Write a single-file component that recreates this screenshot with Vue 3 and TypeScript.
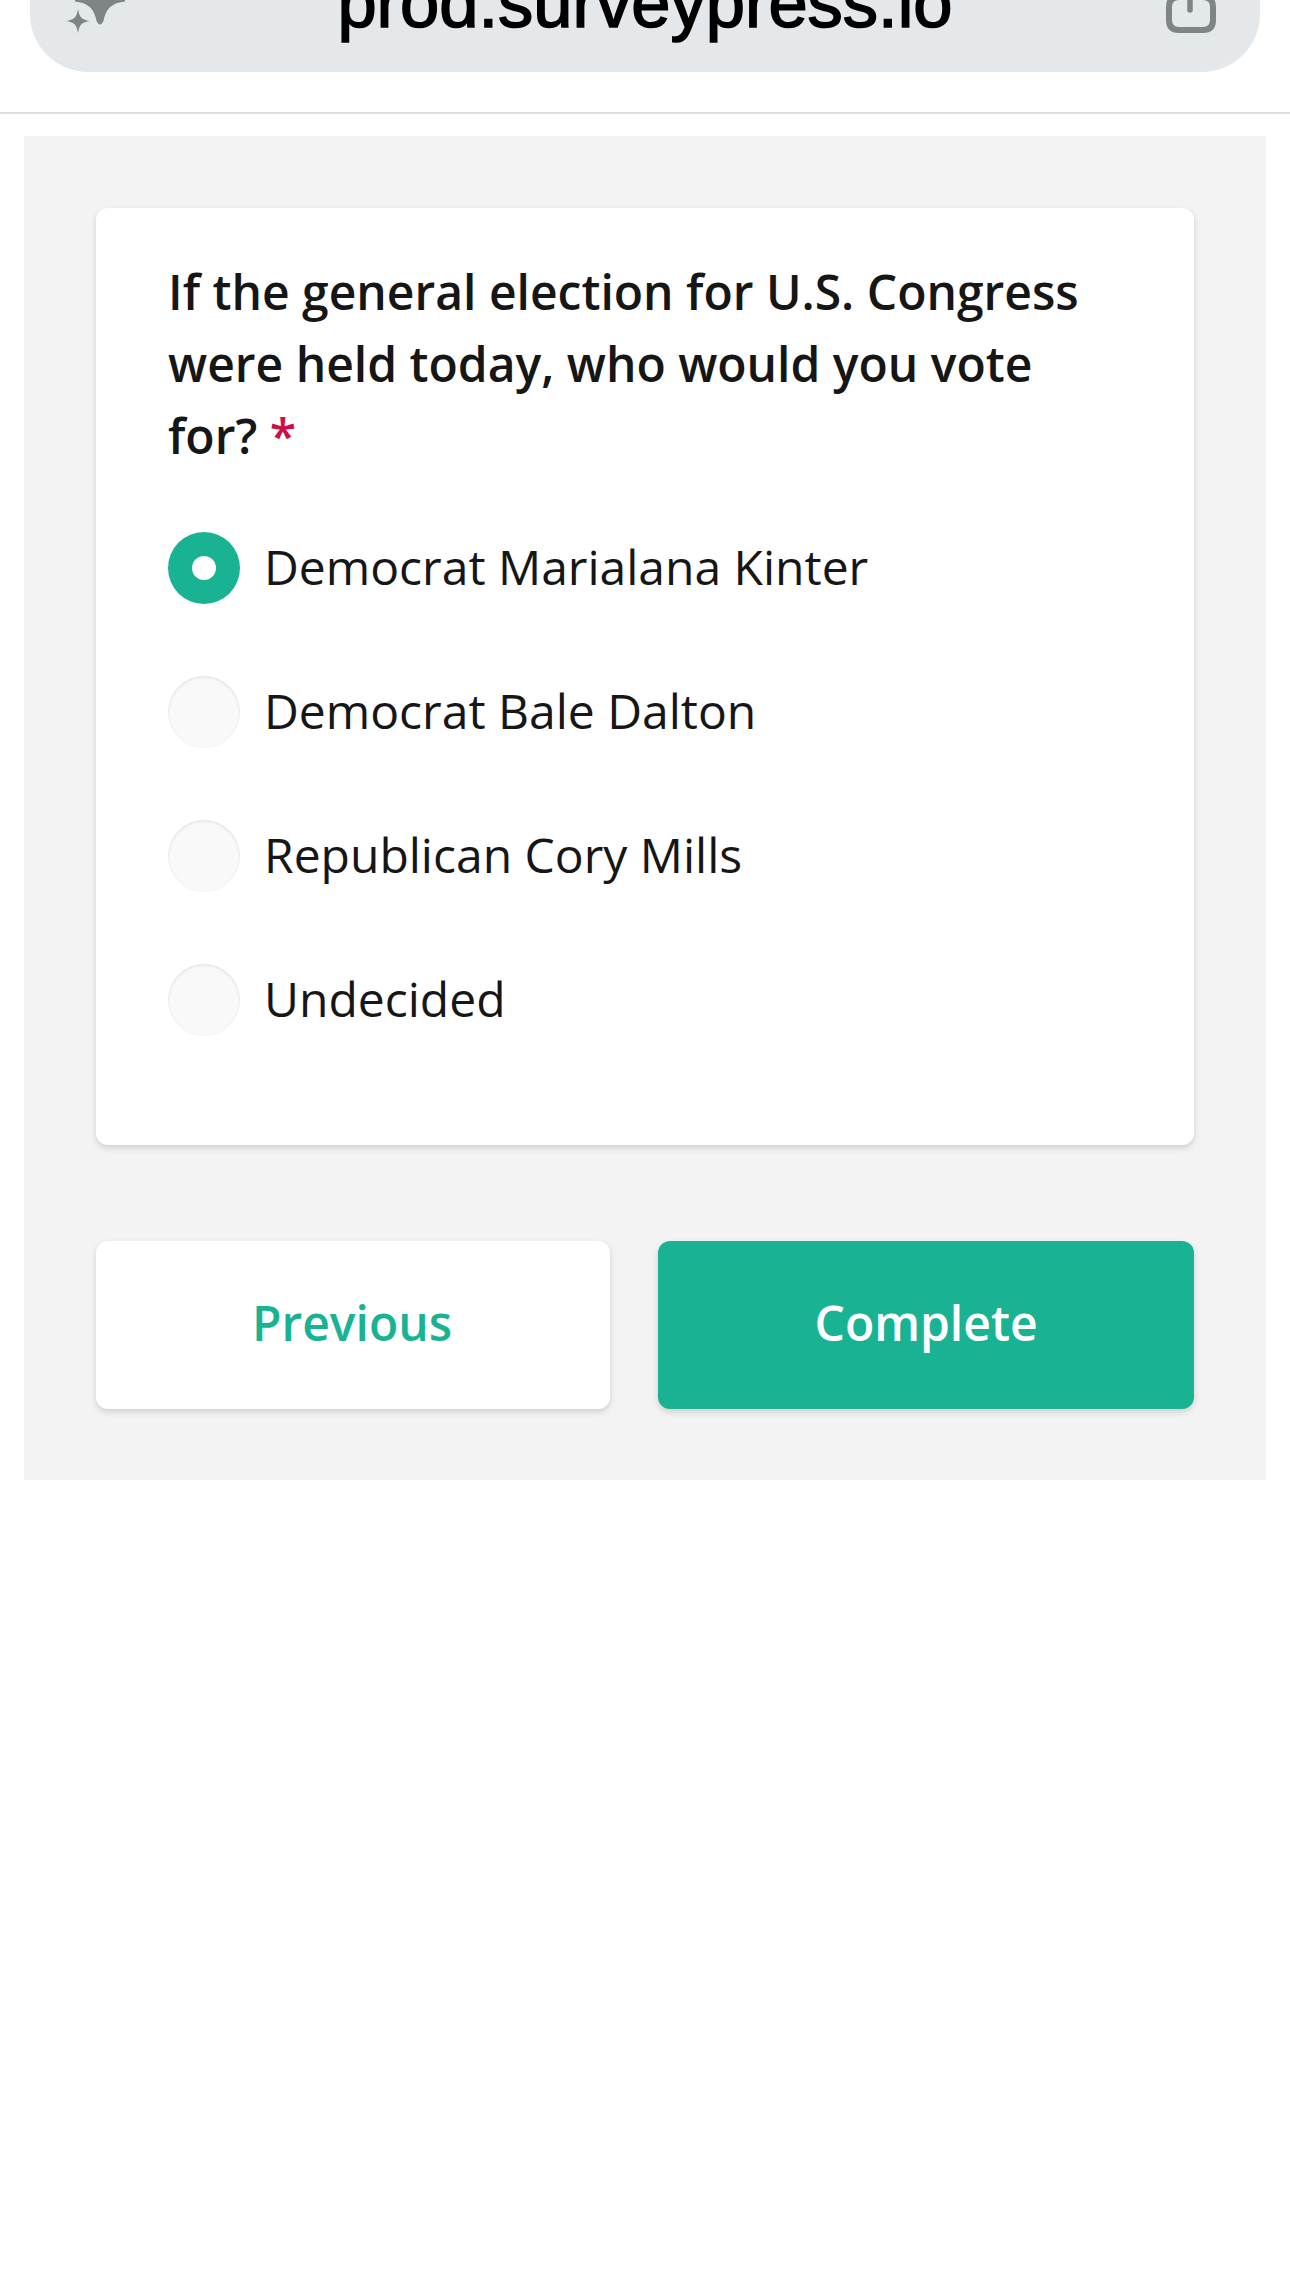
<script setup lang="ts">
import { ref } from 'vue';

const options = ['Democrat Marialana Kinter', 'Democrat Bale Dalton', 'Republican Cory Mills', 'Undecided'];
const selected = ref(0);
</script>

<template>
  <div class="page">
    <div class="browser">
      <div class="url-bar">
        <svg class="sparkle" width="64" height="34" viewBox="0 0 64 34">
          <path d="M34 -30 C36 -12 42 -3 59 0 L59 1.5 C46 3 40 8 37.5 21 Q34 28 30.5 21 C28 8 22 3 9 1.5 L9 0 C26 -3 32 -12 34 -30 Z" fill="#7f8486" />
          <path d="M12 9 C13.5 17 15 19.5 24 21 C15 22.5 13.5 25 12 33 C10.5 25 9 22.5 0 21 C9 19.5 10.5 17 12 9 Z" fill="#7f8486" />
        </svg>
        <span class="url">prod.surveypress.io</span>
        <svg class="share" width="50" height="33" viewBox="0 0 50 33">
          <path d="M14 -3 H13 Q3 -3 3 7 V20 Q3 30 13 30 H37 Q47 30 47 20 V7 Q47 -3 37 -3 H36" fill="none" stroke="#7f8486" stroke-width="6" />
          <path d="M24 -5 V10" fill="none" stroke="#7f8486" stroke-width="5.5" stroke-linecap="round" />
        </svg>
      </div>
    </div>
    <div class="survey">
      <div class="card">
        <h2 class="question">If the general election for U.S. Congress were held today, who would you vote for? <span class="required">*</span></h2>
        <div class="options">
          <label v-for="(option, index) in options" :key="option" class="option" @click="selected = index">
            <span class="radio" :class="{ checked: selected === index }"></span>
            <span class="option-text">{{ option }}</span>
          </label>
        </div>
      </div>
      <div class="actions">
        <button class="btn prev">Previous</button>
        <button class="btn next">Complete</button>
      </div>
    </div>
  </div>
</template>

<style scoped>
.page {
  height: 2292px;
  overflow: hidden;
  background: #fff;
  font-family: "Open Sans", "Noto Sans", sans-serif;
}
.browser {
  height: 112px;
  border-bottom: 2px solid #dcdee0;
  box-sizing: content-box;
  padding: 0 30px;
}
.url-bar {
  height: 72px;
  background: #e5e8eb;
  border-radius: 0 0 58px 58px;
  display: flex;
  align-items: flex-start;
  justify-content: space-between;
  overflow: hidden;
  padding: 0 44px 0 36px;
  box-sizing: border-box;
}
.sparkle {
  overflow: visible;
}
.share {
  overflow: visible;
}
.url {
  font-family: "Liberation Sans", Arial, sans-serif;
  font-size: 70.5px;
  line-height: 70px;
  margin: -32px 6px 0 0;
  color: #000;
  -webkit-text-stroke: 1.6px #000;
}
.survey {
  margin: 22px 24px 0;
  background: #f3f3f3;
  padding: 72px;
  box-sizing: border-box;
  height: 1344px;
}
.card {
  background: #fff;
  border-radius: 12px;
  box-shadow: 0 3px 6px rgba(0, 0, 0, 0.15);
  padding: 48px 72px 0;
  height: 937px;
  box-sizing: border-box;
}
.question {
  margin: 0;
  font-size: 48px;
  line-height: 72px;
  font-weight: 600;
  color: #161616;
}
.required {
  color: #cd0f47;
}
.options {
  margin-top: 60px;
  display: flex;
  flex-direction: column;
  gap: 72px;
}
.option {
  display: flex;
  align-items: center;
  gap: 24px;
  height: 72px;
  font-size: 48px;
  color: #161616;
}
.option-text {
  padding-bottom: 3px;
}
.radio {
  width: 72px;
  height: 72px;
  border-radius: 50%;
  background: #f9f9f9;
  box-shadow: inset 0 1px 3px rgba(0, 0, 0, 0.12);
  position: relative;
  flex: none;
}
.radio.checked {
  background: #19b394;
  box-shadow: none;
}
.radio.checked::after {
  content: "";
  position: absolute;
  left: 24px;
  top: 24px;
  width: 24px;
  height: 24px;
  border-radius: 50%;
  background: #fff;
}
.actions {
  margin-top: 96px;
  display: flex;
  gap: 48px;
}
.btn {
  height: 168px;
  border: none;
  border-radius: 12px;
  font-family: inherit;
  font-size: 48px;
  font-weight: 600;
  padding: 0 0 5px;
  box-shadow: 0 3px 6px rgba(0, 0, 0, 0.15);
}
.prev {
  width: 514px;
  background: #fff;
  color: #19b394;
  padding-right: 2px;
}
.next {
  width: 536px;
  background: #19b394;
  color: #fff;
}
</style>
